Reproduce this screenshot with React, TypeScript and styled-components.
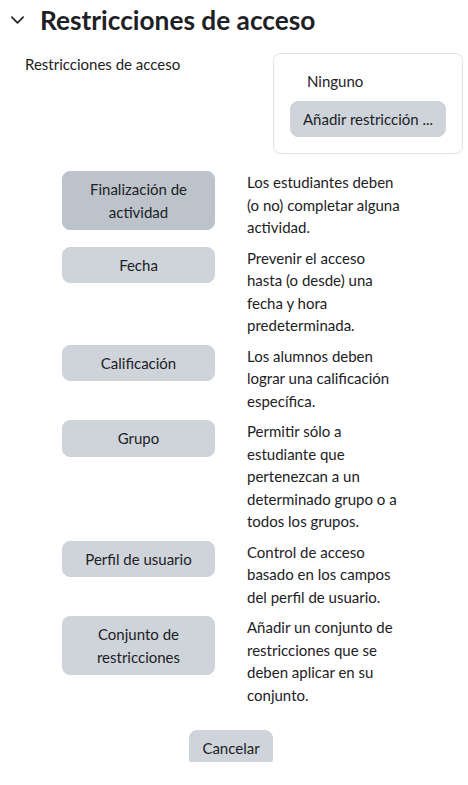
import React from "react";
import styled, { createGlobalStyle } from "styled-components";

const GlobalStyle = createGlobalStyle`
  body {
    margin: 0;
    background: #ffffff;
    font-family: Lato, "Liberation Sans", sans-serif;
    color: #1d2125;
  }
`;

const options = [
  {
    label: "Finalización de actividad",
    text: "Los estudiantes deben (o no) completar alguna actividad.",
    active: true,
  },
  {
    label: "Fecha",
    text: "Prevenir el acceso hasta (o desde) una fecha y hora predeterminada.",
  },
  {
    label: "Calificación",
    text: "Los alumnos deben lograr una calificación específica.",
  },
  {
    label: "Grupo",
    text: "Permitir sólo a estudiante que pertenezcan a un determinado grupo o a todos los grupos.",
  },
  {
    label: "Perfil de usuario",
    text: "Control de acceso basado en los campos del perfil de usuario.",
  },
  {
    label: "Conjunto de restricciones",
    text: "Añadir un conjunto de restricciones que se deben aplicar en su conjunto.",
  },
];

export default function App() {
  return (
    <>
      <GlobalStyle />
      <Viewport>
        <Header>
          <Chevron viewBox="0 0 16 10" aria-hidden>
            <path d="M2 2l6 6 6-6" />
          </Chevron>
          <Title>Restricciones de acceso</Title>
        </Header>

        <FormRow>
          <FieldLabel>Restricciones de acceso</FieldLabel>
          <Panel>
            <NoneText>Ninguno</NoneText>
            <Button>Añadir restricción ...</Button>
          </Panel>
        </FormRow>

        <OptionGrid>
          {options.map((o) => (
            <React.Fragment key={o.label}>
              <OptionButton $active={o.active}>{o.label}</OptionButton>
              <OptionText>{o.text}</OptionText>
            </React.Fragment>
          ))}
        </OptionGrid>

        <Footer>
          <Button>Cancelar</Button>
        </Footer>
      </Viewport>
    </>
  );
}

const Viewport = styled.div`
  height: 762px;
  overflow: hidden;
  font-size: 15px;
  line-height: 22.5px;
`;

const Header = styled.div`
  display: flex;
  align-items: center;
  gap: 15px;
  padding: 2px 0 0 10px;
  height: 36px;
`;

const Chevron = styled.svg`
  width: 15px;
  height: 10px;
  fill: none;
  stroke: #1d2125;
  stroke-width: 1.8;
  stroke-linecap: round;
  stroke-linejoin: round;
`;

const Title = styled.h3`
  margin: 0;
  font-size: 26.25px;
  line-height: 31px;
  font-weight: 700;
  color: #1d2125;
`;

const FormRow = styled.div`
  display: flex;
  margin-top: 15px;
  padding-left: 25px;
`;

const FieldLabel = styled.div`
  width: 248px;
`;

const Panel = styled.div`
  width: 156px;
  border: 1px solid #dee2e6;
  border-radius: 8px;
  padding: 16px;
  display: flex;
  flex-direction: column;
  align-items: flex-start;
  gap: 8px;
`;

const NoneText = styled.div`
  padding-left: 17px;
`;

const Button = styled.button`
  font-family: inherit;
  font-size: 15px;
  line-height: 22.5px;
  color: #1d2125;
  background: #ced4da;
  border: 1px solid #ced4da;
  border-radius: 8px;
  padding: 6px 12px;
  white-space: nowrap;
`;

const OptionGrid = styled.div`
  display: grid;
  grid-template-columns: 153px 154px;
  column-gap: 32px;
  row-gap: 8px;
  align-items: start;
  margin: 17px 0 0 62px;
`;

const OptionButton = styled.button<{ $active?: boolean }>`
  font-family: inherit;
  font-size: 15px;
  line-height: 22.5px;
  color: #1d2125;
  background: ${(p) => (p.$active ? "#bcc3ca" : "#ced4da")};
  border: 1px solid ${(p) => (p.$active ? "#bcc3ca" : "#ced4da")};
  border-radius: 8px;
  padding: 6px 12px;
  text-align: center;
`;

const OptionText = styled.div`
  color: #1d2125;
`;

const Footer = styled.div`
  display: flex;
  justify-content: center;
  margin-top: 24px;
  padding-right: 6px;
`;
